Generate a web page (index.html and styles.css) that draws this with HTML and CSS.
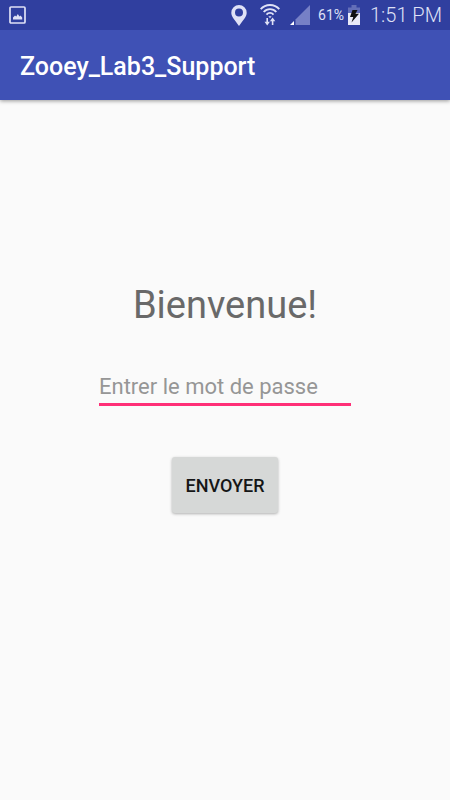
FILE: index.html
```html
<!DOCTYPE html>
<html lang="fr">
<head>
<meta charset="utf-8">
<meta name="viewport" content="width=device-width, initial-scale=1">
<title>Zooey_Lab3_Support</title>
<link rel="stylesheet" href="styles.css">
</head>
<body>
<div class="status">
  <svg class="picture" width="18" height="18" viewBox="0 0 18 18" aria-hidden="true">
    <rect x="1" y="1" width="15" height="16" rx="1" fill="none" stroke="#dfe1f6" stroke-width="1.700"/>
    <path d="M4 13.500v-2l2-2 1.300 1 1.500-2.500 1.700 2.500 1-1 1.700 2v2z" fill="#dfe1f6"/>
  </svg>
  <svg class="pin" width="16" height="21" viewBox="0 0 16 21" aria-hidden="true">
    <path fill="#dfe1f6" fill-rule="evenodd" d="M8 0a7.700 7.700 0 0 0-7.700 7.700C.3 12 4 15 8 21c4-6 7.700-9 7.700-13.300A7.700 7.700 0 0 0 8 0zm0 3.600a4 4 0 1 1 0 8A4 4 0 0 1 8 3.600z"/>
  </svg>
  <svg class="wifi" width="20" height="22" viewBox="0 0 20 22" aria-hidden="true">
    <g fill="none" stroke="#dfe1f6">
      <path stroke-width="1.900" d="M.7 5.200C5.500-.4 14.500-.4 19.300 5.200M3.700 8C7 4.100 13 4.100 16.300 8M6.500 10.600c2-2.300 5-2.300 7 0"/>
      <path d="M7.200 14v5M12.600 21v-5" stroke-width="1.600"/>
    </g>
    <path d="M4.500 17.800h5.400L7.200 21.500zM9.900 17.200h5.400l-2.700-3.700z" fill="#dfe1f6"/>
    <path d="M8.400 12.300h3.200L10 14.200z" fill="#dfe1f6"/>
  </svg>
  <svg class="signal" width="20" height="20" viewBox="0 0 20 20" aria-hidden="true">
    <path d="M20 0v20H5.500V14.500z" fill="#7680c6"/>
    <path d="M4 16v4H0z" fill="#fff"/>
  </svg>
  <span class="percent">61%</span>
  <svg class="battery" width="12" height="20" viewBox="0 0 12 20" aria-hidden="true">
    <path d="M3.500 0h5v2.500H12V20H0V2.500h3.500z" fill="#636eb8"/>
    <path d="M0 8h12v12H0z" fill="#e9eaf7"/>
    <path d="M4.500 5h5L7.500 8.800H11L3.500 17.500l1.800-5.500H2z" fill="#111"/>
  </svg>
  <time class="clock">1:51 PM</time>
</div>
<header class="appbar"><span class="title">Zooey_Lab3_Support</span></header>
<main class="content">
  <h1 class="welcome">Bienvenue!</h1>
  <form class="form" onsubmit="return false">
    <input class="password" type="password" placeholder="Entrer le mot de passe" aria-label="Entrer le mot de passe">
    <button class="send" type="submit">ENVOYER</button>
  </form>
</main>
</body>
</html>
```
FILE: styles.css
```css
* {
  box-sizing: border-box;
}

body {
  margin: 0;
  min-height: 100vh;
  display: flex;
  flex-direction: column;
  background: #fafafa;
  font-family: Roboto, "Liberation Sans", sans-serif;
}

.status {
  display: flex;
  align-items: center;
  height: 30px;
  padding: 0 8px 0 9px;
  background: #303f9f;
  color: #dfe1f6;
}

.pin {
  margin-left: auto;
}

.wifi {
  margin-left: 13px;
}

.signal {
  margin-left: 10px;
}

.percent {
  margin-left: 8px;
  font-size: 14px;
}

.battery {
  margin-left: 4px;
}

.clock {
  margin-left: 10px;
  font-size: 20px;
  font-weight: 300;
}

.appbar {
  display: flex;
  align-items: center;
  height: 70px;
  padding: 4px 20px 0;
  background: #3f51b5;
  box-shadow: 0 1px 4px rgba(0, 0, 0, 0.4);
  clip-path: inset(0 0 -8px 0);
}

.title {
  color: #fff;
  font-size: 25px;
  font-weight: 500;
  line-height: 32px;
}

.content {
  flex: 1;
  display: flex;
  flex-direction: column;
  align-items: center;
  justify-content: center;
  padding-bottom: 106px;
}

.welcome {
  margin: 0;
  color: #696969;
  font-size: 38px;
  font-weight: 400;
  line-height: 48px;
}

.form {
  width: 56%;
  display: flex;
  flex-direction: column;
  align-items: center;
  margin-top: 40px;
}

.password {
  width: 100%;
  height: 37px;
  padding: 0;
  border: 0;
  border-bottom: 3px solid #ff2f77;
  outline: 0;
  background: transparent;
  color: #212121;
  font: 22px Roboto, "Liberation Sans", sans-serif;
}

.password::placeholder {
  color: #969696;
  opacity: 1;
}

.send {
  height: 56px;
  margin-top: 51px;
  padding: 0 14px;
  border: 0;
  border-radius: 3px;
  background: #d6d8d7;
  box-shadow: 0 1px 3px rgba(0, 0, 0, 0.3);
  color: #151616;
  font: 500 18px Roboto, "Liberation Sans", sans-serif;
}
```
